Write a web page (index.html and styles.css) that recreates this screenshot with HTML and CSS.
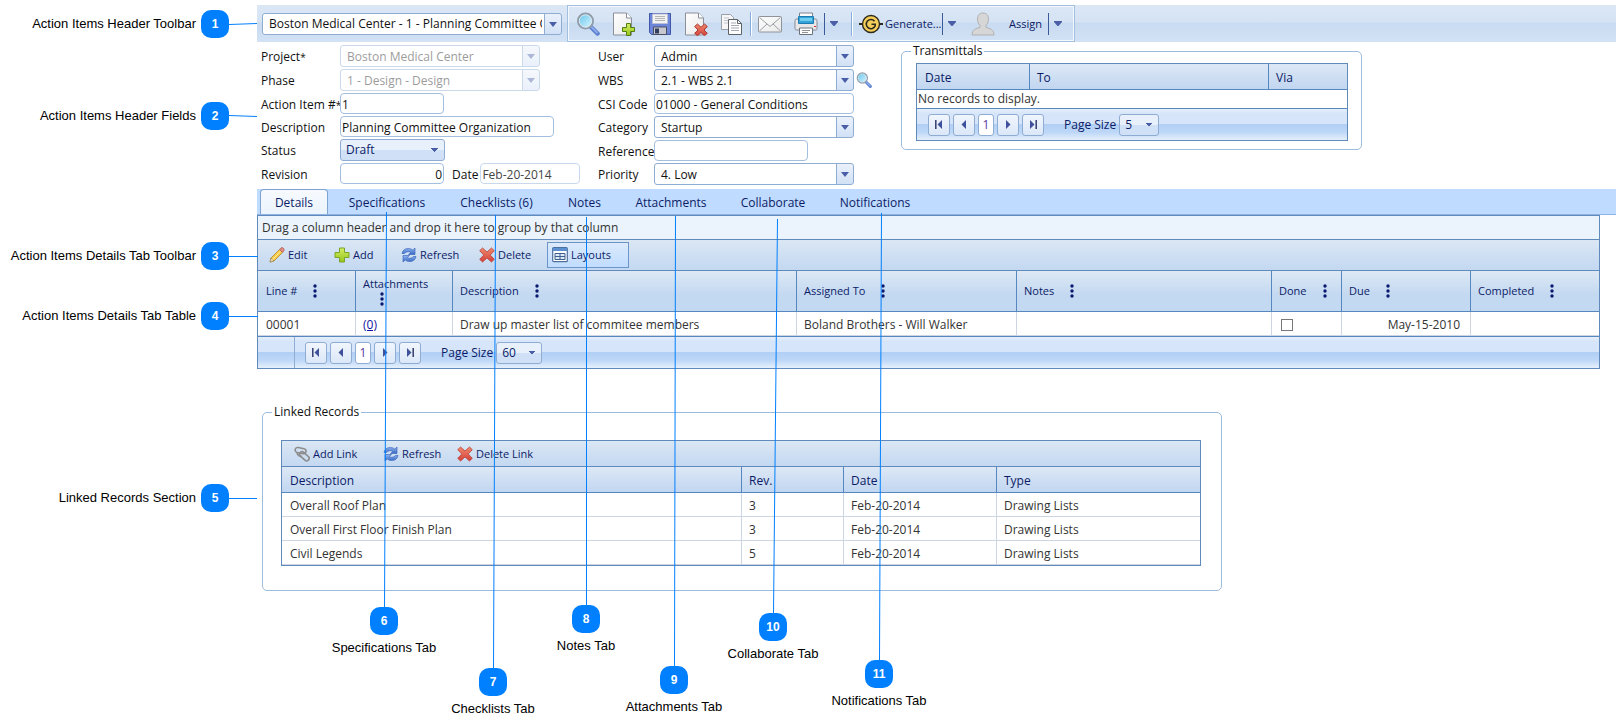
FILE: index.html
```html
<!DOCTYPE html>
<html lang="en">
<head>
<meta charset="utf-8">
<title>Action Items</title>
<link rel="stylesheet" href="styles.css">
</head>
<body>
<svg class="sprite" aria-hidden="true">
  <defs>
    <linearGradient id="g-page" x1="0" y1="0" x2="1" y2="1"><stop offset="0" stop-color="#ffffff"/><stop offset="1" stop-color="#e9e9e9"/></linearGradient>
    <linearGradient id="g-lens" x1="0" y1="0" x2="1" y2="1"><stop offset="0" stop-color="#5fc4ee"/><stop offset="1" stop-color="#e2f8ff"/></linearGradient>
    <linearGradient id="g-red" x1="0" y1="0" x2="0" y2="1"><stop offset="0" stop-color="#f08a6c"/><stop offset="1" stop-color="#d2403a"/></linearGradient>
    <linearGradient id="g-green" x1="0" y1="0" x2="0" y2="1"><stop offset="0" stop-color="#d3ee62"/><stop offset="1" stop-color="#97c51b"/></linearGradient>
    <linearGradient id="g-blue" x1="0" y1="0" x2="0" y2="1"><stop offset="0" stop-color="#8fb4ee"/><stop offset="1" stop-color="#3a69c4"/></linearGradient>
  </defs>
  <symbol id="i-search" viewBox="0 0 24 24">
    <path d="M15 15l6.500 6.500" stroke="#5b7fd0" stroke-width="4.500" stroke-linecap="round"/>
    <path d="M15 14.500l6 6" stroke="#8fabea" stroke-width="2" stroke-linecap="round"/>
    <circle cx="9.500" cy="9" r="7.500" fill="url(#g-lens)" stroke="#8e9cab" stroke-width="2"/>
    <circle cx="9.500" cy="9" r="6.200" fill="none" stroke="#dfe7ee" stroke-width="1"/>
  </symbol>
  <symbol id="i-new" viewBox="0 0 24 24">
    <path d="M1.500 1h13l5 5v17h-18z" fill="url(#g-page)" stroke="#8a8f98"/>
    <path d="M14.500 1v5h5" fill="#fff" stroke="#8a8f98"/>
    <path d="M14.500 11.500h4v4h4v4h-4v4h-4v-4h-4v-4h4z" fill="url(#g-green)" stroke="#4f7d10"/>
  </symbol>
  <symbol id="i-save" viewBox="0 0 24 24">
    <path d="M1.500 1.500h21v21h-19l-2-2z" fill="#6c86da" stroke="#4056a8"/>
    <path d="M4.500 2h15v9.500h-15z" fill="#f3f3f3" stroke="#b9bfd6"/>
    <path d="M7 4.500h10M7 6.500h10M7 8.500h10" stroke="#b4b4b4"/>
    <path d="M5.500 15h13v7.500h-13z" fill="#c8c9d0" stroke="#4a4f66"/>
    <path d="M7 16.500h4v5h-4z" fill="#32405f"/>
  </symbol>
  <symbol id="i-pagedel" viewBox="0 0 24 24">
    <path d="M1.500 1h13l5 5v17h-18z" fill="url(#g-page)" stroke="#8a8f98"/>
    <path d="M14.500 1v5h5" fill="#fff" stroke="#8a8f98"/>
    <path d="M13.500 12l3.500 3.300 3.500-3.300 2.800 2.500-3.300 3.500 3.300 3.300-2.800 2.500-3.500-3.300-3.500 3.300-2.800-2.500 3.300-3.300-3.300-3.500z" fill="url(#g-red)" stroke="#a93430"/>
  </symbol>
  <symbol id="i-copy" viewBox="0 0 24 24">
    <path d="M1.500 2.500h9l3 3v12h-12z" fill="#f6f6f6" stroke="#9aa0a8"/>
    <path d="M4 6h5M4 8.500h7M4 11h4" stroke="#c0c4ca"/>
    <path d="M8.500 7.500h9l4 4v11h-13z" fill="#fdfdfd" stroke="#5d6269"/>
    <path d="M17.500 7.500v4h4" fill="none" stroke="#5d6269"/>
    <path d="M11 11h5M11 13.500h8M11 16h8M11 18.500h8" stroke="#a6abb3"/>
  </symbol>
  <symbol id="i-mail" viewBox="0 0 24 24">
    <rect x=".5" y="4.500" width="23" height="15.500" rx="1" fill="url(#g-page)" stroke="#8f9399"/>
    <path d="M1.500 5.500l10.500 9 10.500-9M1.500 19l7.500-7M22.500 19l-7.500-7" fill="none" stroke="#9b9fa5"/>
  </symbol>
  <symbol id="i-print" viewBox="0 0 24 24">
    <path d="M5.500 1h13v8h-13z" fill="#fbfbfb" stroke="#7e848c"/>
    <path d="M1 8.500q0-1.500 2-1.500h18q2 0 2 1.500v8q0 1.500-1.500 1.500h-19q-1.500 0-1.500-1.500z" fill="#e7e7ea" stroke="#868b93"/>
    <path d="M4.500 4.500h15v7h-15z" fill="#35a3d8" stroke="#1c7cb0"/>
    <path d="M6 6h12v3h-12z" fill="#6fcdf0"/>
    <path d="M5.500 16h13v6.500h-13z" fill="#fff" stroke="#6d727a"/>
    <path d="M8 18.500h8M8 20.500h6" stroke="#8d929a"/>
    <path d="M20 14.500h2" stroke="#d33"/>
  </symbol>
  <symbol id="i-gen" viewBox="0 0 24 24">
    <path d="M0 12h4M20 12h4" stroke="#2b2b20" stroke-width="2"/>
    <circle cx="12" cy="12" r="8.500" fill="#f6cf5b" stroke="#2f2b1c" stroke-width="1.400"/>
    <path d="M15.500 9.200a4.600 4.600 0 1 0 .7 4.600v-1.600h-3.700" fill="none" stroke="#2f2b1c" stroke-width="1.600"/>
  </symbol>
  <symbol id="i-user" viewBox="0 0 24 24">
    <path d="M12 1c3.600 0 5.500 2.400 5.500 6 0 2.800-1 5-2.500 6.300v2.200c4.500.8 8 2.500 8 7.500h-22c0-5 3.500-6.700 8-7.500v-2.200c-1.500-1.300-2.500-3.500-2.500-6.300 0-3.600 1.900-6 5.500-6z" fill="#d6d6d6" stroke="#b0b0b0"/>
  </symbol>
  <symbol id="i-pencil" viewBox="0 0 16 16">
    <path d="M1 15l1-4 8.500-8.500 3 3-8.500 8.500z" fill="#f7c948" stroke="#b08a2a" stroke-width=".8"/>
    <path d="M10.500 2.500l1.500-1.600q1.200-.8 2.300.2t.7 2.400l-1.500 2z" fill="#e58a83" stroke="#a8625c" stroke-width=".8"/>
    <path d="M1 15l1-4 3 3z" fill="#ecd9b8" stroke="#8e7a55" stroke-width=".6"/>
    <path d="M3.500 12.500l8-8" stroke="#fdeaa0"/>
  </symbol>
  <symbol id="i-add" viewBox="0 0 16 16">
    <path d="M5.500 1h5v4.500h4.500v5h-4.500v4.500h-5v-4.500h-4.500v-5h4.500z" fill="url(#g-green)" stroke="#7ba428"/>
  </symbol>
  <symbol id="i-refresh" viewBox="0 0 16 16">
    <path d="M1 6.500q1-5 6.500-5 2.500 0 4.300 1.500l2.200-2v6.500h-6.500l2.200-2q-1.200-1-2.700-.8-2.300.1-3.500 1.800z" fill="url(#g-blue)" stroke="#3f6abf" stroke-width=".7"/>
    <path d="M15 9.500q-1 5-6.500 5-2.500 0-4.300-1.500l-2.200 2v-6.500h6.500l-2.200 2q1.200 1 2.700.8 2.300-.1 3.500-1.800z" fill="url(#g-blue)" stroke="#3f6abf" stroke-width=".7"/>
  </symbol>
  <symbol id="i-del" viewBox="0 0 16 16">
    <path d="M3.500 1l4.500 4 4.500-4 2.800 2.700-4.100 4.300 4.100 4.300-2.800 2.700-4.500-4-4.500 4-2.800-2.700 4.100-4.300-4.100-4.300z" fill="url(#g-red)" stroke="#bb4038" stroke-width=".8"/>
  </symbol>
  <symbol id="i-layout" viewBox="0 0 16 16">
    <rect x=".7" y=".7" width="14.600" height="14" rx="1" fill="#fff" stroke="#4c6f9c" stroke-width="1.200"/>
    <path d="M1 1h14v3h-14z" fill="#5b8fd0"/>
    <path d="M3 6.500h10v6h-10z" fill="#dbe9f8" stroke="#3f5f8c"/>
    <path d="M8 6.500v6M3 9.500h10" stroke="#3f5f8c"/>
  </symbol>
  <symbol id="i-link" viewBox="0 0 16 16">
    <g fill="none" stroke="#8c8c8c" stroke-width="1.600"><rect x="1" y="2" width="11" height="5" rx="2.500" transform="rotate(12 6 5)"/><rect x="5" y="7.500" width="11" height="5" rx="2.500" transform="rotate(42 10 10)"/><path d="M3 7q1 3.500 5 3.500"/></g>
  </symbol>
  <symbol id="i-caret" viewBox="0 0 8 5"><path d="M0 0h8v1l-3.500 4h-1l-3.500-4z" fill="#4a5ea8"/></symbol>
  <symbol id="i-dots" viewBox="0 0 4 14"><g fill="#0a1a70"><circle cx="2" cy="2" r="1.700"/><circle cx="2" cy="7" r="1.700"/><circle cx="2" cy="12" r="1.700"/></g></symbol>
  <symbol id="i-first" viewBox="0 0 8 9"><path d="M.8 0v9" stroke="#333c6e" stroke-width="1.500"/><path d="M7 0v9l-4.500-4.500z" fill="#3f519a"/></symbol>
  <symbol id="i-prev" viewBox="0 0 8 9"><path d="M6 0v9l-4.500-4.500z" fill="#3f519a"/></symbol>
  <symbol id="i-next" viewBox="0 0 8 9"><path d="M2 0v9l4.500-4.500z" fill="#3f519a"/></symbol>
  <symbol id="i-last" viewBox="0 0 8 9"><path d="M7.200 0v9" stroke="#333c6e" stroke-width="1.500"/><path d="M1 0v9l4.500-4.500z" fill="#3f519a"/></symbol>
</svg>

<main class="app">
  <header class="topbar">
    <span class="combo record"><select aria-label="Action item record"><option>Boston Medical Center - 1 - Planning Committee Organization</option></select></span>
    <div class="tools" role="toolbar" aria-label="Action item">
      <div class="tool-group">
        <button class="tool" aria-label="Search"><svg><use href="#i-search"/></svg></button>
        <button class="tool" aria-label="New"><svg><use href="#i-new"/></svg></button>
        <button class="tool" aria-label="Save"><svg><use href="#i-save"/></svg></button>
        <button class="tool" aria-label="Delete"><svg><use href="#i-pagedel"/></svg></button>
        <button class="tool" aria-label="Copy"><svg><use href="#i-copy"/></svg></button>
      </div>
      <span class="divider"></span>
      <div class="tool-group">
        <button class="tool" aria-label="Email"><svg><use href="#i-mail"/></svg></button>
        <button class="tool" aria-label="Print"><svg><use href="#i-print"/></svg></button>
      </div>
      <button class="split" aria-label="Print options"><svg><use href="#i-caret"/></svg></button>
      <span class="divider"></span>
      <button class="tool wide"><svg><use href="#i-gen"/></svg>Generate...</button>
      <button class="split" aria-label="Generate options"><svg><use href="#i-caret"/></svg></button>
      <button class="tool wide assign"><svg><use href="#i-user"/></svg>Assign</button>
      <button class="split" aria-label="Assign options"><svg><use href="#i-caret"/></svg></button>
    </div>
  </header>

  <section class="fields">
    <div class="form form-a">
      <label for="project">Project<small>*</small></label>
      <span class="combo off"><select id="project" disabled><option>Boston Medical Center</option></select></span>
      <label for="phase">Phase</label>
      <span class="combo off"><select id="phase" disabled><option>1 - Design - Design</option></select></span>
      <label for="num">Action Item #<small>*</small></label>
      <input id="num" class="text short" value="1">
      <label for="desc">Description</label>
      <input id="desc" class="text long" value="Planning Committee Organization">
      <label for="status">Status</label>
      <select id="status" class="drop short"><option>Draft</option></select>
      <label for="rev">Revision</label>
      <div class="pair"><input id="rev" class="text short num" value="0"><label for="date">Date</label><input id="date" class="text date" value="Feb-20-2014" disabled></div>
    </div>
    <div class="form form-b">
      <label for="user">User</label>
      <span class="combo"><select id="user"><option>Admin</option></select></span>
      <label for="wbs">WBS</label>
      <div class="pair"><span class="combo"><select id="wbs"><option>2.1 - WBS 2.1</option></select></span><button class="lookup" aria-label="Find WBS"><svg><use href="#i-search"/></svg></button></div>
      <label for="csi">CSI Code</label>
      <input id="csi" class="text" value="01000 - General Conditions">
      <label for="cat">Category</label>
      <span class="combo"><select id="cat"><option>Startup</option></select></span>
      <label for="ref">Reference</label>
      <input id="ref" class="text mid">
      <label for="pri">Priority</label>
      <span class="combo"><select id="pri"><option>4. Low</option></select></span>
    </div>
    <fieldset class="transmittals">
      <legend>Transmittals</legend>
      <div class="grid">
        <table>
          <colgroup><col class="w112"><col><col class="w79"></colgroup>
          <thead><tr><th>Date</th><th>To</th><th>Via</th></tr></thead>
          <tbody><tr><td colspan="3" class="empty">No records to display.</td></tr></tbody>
        </table>
        <div class="pager">
          <button class="page" aria-label="First page"><svg><use href="#i-first"/></svg></button>
          <button class="page" aria-label="Previous page"><svg><use href="#i-prev"/></svg></button>
          <button class="page current">1</button>
          <button class="page" aria-label="Next page"><svg><use href="#i-next"/></svg></button>
          <button class="page" aria-label="Last page"><svg><use href="#i-last"/></svg></button>
          <label for="size-a">Page Size</label>
          <select id="size-a" class="drop size-s"><option>5</option></select>
        </div>
      </div>
    </fieldset>
  </section>

  <nav class="tabs" role="tablist">
    <button class="tab active" role="tab" aria-selected="true">Details</button>
    <button class="tab" role="tab">Specifications</button>
    <button class="tab" role="tab">Checklists (6)</button>
    <button class="tab" role="tab">Notes</button>
    <button class="tab" role="tab">Attachments</button>
    <button class="tab" role="tab">Collaborate</button>
    <button class="tab" role="tab">Notifications</button>
  </nav>

  <section class="grid details">
    <div class="group-hint">Drag a column header and drop it here to group by that column</div>
    <div class="commands" role="toolbar" aria-label="Details">
      <button class="cmd"><svg><use href="#i-pencil"/></svg>Edit</button>
      <button class="cmd"><svg><use href="#i-add"/></svg>Add</button>
      <button class="cmd"><svg><use href="#i-refresh"/></svg>Refresh</button>
      <button class="cmd"><svg><use href="#i-del"/></svg>Delete</button>
      <button class="cmd boxed"><svg><use href="#i-layout"/></svg>Layouts</button>
    </div>
    <table>
      <colgroup><col class="w97"><col class="w97"><col><col class="w220"><col class="w255"><col class="w70"><col class="w129"><col class="w129"></colgroup>
      <thead><tr>
        <th><div class="head">Line #<button aria-label="Line # menu"><svg><use href="#i-dots"/></svg></button></div></th>
        <th><div class="head stacked">Attachments<button aria-label="Attachments menu"><svg><use href="#i-dots"/></svg></button></div></th>
        <th><div class="head">Description<button aria-label="Description menu"><svg><use href="#i-dots"/></svg></button></div></th>
        <th><div class="head">Assigned To<button aria-label="Assigned To menu"><svg><use href="#i-dots"/></svg></button></div></th>
        <th><div class="head">Notes<button aria-label="Notes menu"><svg><use href="#i-dots"/></svg></button></div></th>
        <th><div class="head">Done<button aria-label="Done menu"><svg><use href="#i-dots"/></svg></button></div></th>
        <th><div class="head">Due<button aria-label="Due menu"><svg><use href="#i-dots"/></svg></button></div></th>
        <th><div class="head">Completed<button aria-label="Completed menu"><svg><use href="#i-dots"/></svg></button></div></th>
      </tr></thead>
      <tbody><tr>
        <td>00001</td><td><a href="#attachments">(0)</a></td><td>Draw up master list of commitee members</td><td>Boland Brothers - Will Walker</td><td></td>
        <td><input type="checkbox" class="check" aria-label="Done"></td><td class="right">May-15-2010</td><td></td>
      </tr></tbody>
    </table>
    <div class="pager indented">
      <button class="page" aria-label="First page"><svg><use href="#i-first"/></svg></button>
      <button class="page" aria-label="Previous page"><svg><use href="#i-prev"/></svg></button>
      <button class="page current">1</button>
      <button class="page" aria-label="Next page"><svg><use href="#i-next"/></svg></button>
      <button class="page" aria-label="Last page"><svg><use href="#i-last"/></svg></button>
      <label for="size-b">Page Size</label>
      <select id="size-b" class="drop size-l"><option>60</option></select>
    </div>
  </section>

  <fieldset class="linked">
    <legend>Linked Records</legend>
    <div class="grid">
      <div class="commands links" role="toolbar" aria-label="Linked records">
        <button class="cmd"><svg><use href="#i-link"/></svg>Add Link</button>
        <button class="cmd"><svg><use href="#i-refresh"/></svg>Refresh</button>
        <button class="cmd"><svg><use href="#i-del"/></svg>Delete Link</button>
      </div>
      <table>
        <colgroup><col><col class="w102"><col class="w153"><col class="w204"></colgroup>
        <thead><tr><th>Description</th><th>Rev.</th><th>Date</th><th>Type</th></tr></thead>
        <tbody>
          <tr><td>Overall Roof Plan</td><td>3</td><td>Feb-20-2014</td><td>Drawing Lists</td></tr>
          <tr><td>Overall First Floor Finish Plan</td><td>3</td><td>Feb-20-2014</td><td>Drawing Lists</td></tr>
          <tr><td>Civil Legends</td><td>5</td><td>Feb-20-2014</td><td>Drawing Lists</td></tr>
        </tbody>
      </table>
    </div>
  </fieldset>
</main>

<svg class="leaders" aria-hidden="true">
  <g stroke="#0080ff" fill="none">
    <path d="M229 24.500L257 23.500M229 115.500L257 116.500M229 256.500H258M229 316.500H258M229 498.500H257"/>
    <path d="M386.500 212L384.500 607M495.500 215L493.500 668M586.500 217V605M675.500 216L674.500 666M777.500 219L773.500 613M881.500 213L879.500 660"/>
  </g>
</svg>
<div class="callout side c1">Action Items Header Toolbar<b>1</b></div>
<div class="callout side c2">Action Items Header Fields<b>2</b></div>
<div class="callout side c3">Action Items Details Tab Toolbar<b>3</b></div>
<div class="callout side c4">Action Items Details Tab Table<b>4</b></div>
<div class="callout side c5">Linked Records Section<b>5</b></div>
<div class="callout below c6"><b>6</b>Specifications Tab</div>
<div class="callout below c7"><b>7</b>Checklists Tab</div>
<div class="callout below c8"><b>8</b>Notes Tab</div>
<div class="callout below c9"><b>9</b>Attachments Tab</div>
<div class="callout below c10"><b>10</b>Collaborate Tab</div>
<div class="callout below c11"><b>11</b>Notifications Tab</div>
</body>
</html>
```

FILE: styles.css
```css
* { box-sizing: border-box; }

body {
  margin: 0;
  position: relative;
  min-height: 100vh;
  background: #fff;
  color: #111;
  font: 12px/16px "Open Sans", "Noto Sans", sans-serif;
}

button, input, select { font: inherit; color: inherit; margin: 0; }
button { padding: 0; border: 0; background: none; white-space: nowrap; }
svg { display: block; flex: none; }
small { font-size: 10px; }
.sprite { position: absolute; width: 0; height: 0; }

.app { padding: 5px 0 140px 257px; }

/* Top toolbar */
.topbar {
  display: flex;
  align-items: center;
  gap: 5px;
  height: 37px;
  padding-left: 5px;
  background: linear-gradient(#dce7f5, #d5e3f4 45%, #c8dbf1 50%, #d3e2f5);
}
.tools {
  display: flex;
  align-items: center;
  height: 37px;
  padding: 0 7px 0 8px;
  border: 1px solid #a3bfdf;
  box-shadow: inset 0 0 0 1px #f3f8fe;
  color: #0b1b66;
  font-size: 11px;
}
.tool-group { display: flex; gap: 12px; }
.tool svg { width: 24px; height: 24px; }
.wide { display: flex; align-items: center; gap: 2px; width: 77px; }
.wide.assign { width: 71px; gap: 14px; }
.divider { width: 2px; height: 24px; margin: 0 6px; background: linear-gradient(90deg, #86aedd 50%, #fff 50%); }
.split { width: 19px; height: 22px; margin-left: 6px; padding-left: 5px; border-left: 1px solid #3b5a9a; }
.split svg { width: 8px; height: 5px; }
.split + .tool { margin-left: 10px; }
.split + .divider { margin-left: 8px; }

/* Form controls */
.combo {
  display: flex;
  position: relative;
  width: 200px;
  height: 22px;
}
.combo.record { width: 300px; }
.combo select {
  appearance: none;
  width: 100%;
  padding: 1px 19px 0 6px;
  border: 1px solid #8fadd3;
  border-radius: 3px;
  background: linear-gradient(#eaf1fb, #d2e1f6) right / 17px 100% no-repeat #fff;
}
.combo::before {
  content: "";
  position: absolute;
  inset: 1px 17px 1px auto;
  border-left: 1px solid #8fadd3;
  pointer-events: none;
}
.combo::after {
  content: "";
  position: absolute;
  top: 9px;
  right: 5px;
  border: 4px solid transparent;
  border-top: 5px solid #4a5ea8;
  border-bottom: 0;
  pointer-events: none;
}
.combo.off { opacity: 0.45; }
.combo.off select { opacity: 1; color: #222; }

.text {
  width: 100%;
  height: 21px;
  padding: 2px 1px 0;
  border: 1px solid #a3bfe0;
  border-radius: 4px;
  background: #fff;
}
.text.short { width: 104px; }
.text.long { width: 214px; }
.text.mid { width: 154px; }
.text.date { width: 100px; color: #444; border-color: #c8d9ee; }
.text.num { text-align: right; }

.drop {
  appearance: none;
  height: 22px;
  padding: 0 5px;
  border: 1px solid #8fadd3;
  border-radius: 3px;
  color: #0b1b66;
  background:
    linear-gradient(135deg, #4a5ea8 50%, transparent 50%) right 5px top 8px / 4px 4px no-repeat,
    linear-gradient(225deg, #4a5ea8 50%, transparent 50%) right 9px top 8px / 4px 4px no-repeat,
    linear-gradient(#e8f0fb 48%, #d0e0f6 52%);
}
.drop.size-s { width: 40px; }
.drop.size-l { width: 46px; }
.drop.short { width: 105px; }

.fields {
  display: flex;
  align-items: flex-start;
  padding: 1px 0 4px 4px;
}
.form {
  display: grid;
  align-items: center;
  gap: 2px 0;
  margin-top: 2px;
  white-space: nowrap;
}
.form label { padding-top: 2px; }
.form-a { grid-template-columns: 79px 258px; }
.form-b { grid-template-columns: 56px 200px; margin-right: 47px; }
.pair { display: flex; align-items: center; gap: 2px; }
.pair label { padding-left: 6px; }
.pair .combo { flex: none; }
.lookup svg { width: 16px; height: 16px; }

fieldset {
  min-width: 0;
  margin: 0;
  border: 1px solid #9dbbdc;
  border-radius: 5px;
}
legend { margin-left: -5px; padding: 0 2px; }
.transmittals { width: 461px; padding: 4px 13px 8px 14px; }

/* Grids */
.grid { border: 1px solid #5f8abb; }
table {
  width: 100%;
  table-layout: fixed;
  border-collapse: separate;
  border-spacing: 0;
}
th {
  height: 26px;
  padding: 2px 8px 0;
  border-bottom: 1px solid #5787bf;
  color: #0b1b66;
  font-weight: normal;
  text-align: left;
  white-space: nowrap;
  background: linear-gradient(#dde8f5, #c1d6f1);
}
th + th { padding-left: 7px; border-left: 1px solid #5787bf; }
td {
  height: 24px;
  padding: 2px 8px 0;
  border-bottom: 1px solid #cdd5e3;
  color: #333;
  white-space: nowrap;
}
td + td { padding-left: 7px; border-left: 1px solid #cdd5e3; }
td.empty { height: 18px; padding: 0 1px; border-bottom: 0; }
td.right { text-align: right; padding-right: 10px; }
td a { color: #1414a0; }
.w70 { width: 70px; }
.w79 { width: 79px; }
.w97 { width: 97px; }
.w102 { width: 102px; }
.w112 { width: 112px; }
.w129 { width: 129px; }
.w153 { width: 153px; }
.w204 { width: 204px; }
.w220 { width: 220px; }
.w255 { width: 255px; }

.pager {
  display: flex;
  align-items: center;
  gap: 3px;
  height: 32px;
  padding-left: 11px;
  border-top: 1px solid #5787bf;
  color: #0b1b66;
  background: linear-gradient(#e6effb, #d6e5f9 15%, #d6e5f9 47%, #b1cff5 50%, #bdd7f7 75%, #e6f0fc);
}
.pager label { margin-left: 17px; }
.page {
  display: flex;
  align-items: center;
  justify-content: center;
  width: 22px;
  height: 22px;
  border: 1px solid #8fadd3;
  border-radius: 3px;
  background: linear-gradient(#f1f6fd, #dbe7f8);
}
.page svg { width: 8px; height: 9px; }
.page.current { width: 16px; color: #5a3ea0; background: #fff; }

/* Tabs */
.tabs {
  display: grid;
  grid-template-columns: 71px 112px 107px 69px 104px 100px 104px;
  height: 26px;
  padding-left: 3px;
  border-bottom: 1px solid #8db2e3;
  background: #bfdbff;
  color: #0b1b66;
}
.tab { padding-top: 2px; }
.tab.active {
  width: 68px;
  border: 1px solid #7ea3cf;
  border-bottom: 0;
  border-radius: 4px 4px 0 0;
  background: linear-gradient(#f7fafe, #ebf3fd);
}

.details { margin-right: 16px; }
.group-hint {
  height: 24px;
  padding: 4px;
  border-bottom: 1px solid #5f8abb;
  color: #333;
  background: #ebf3fd;
}
.commands {
  display: grid;
  grid-template-columns: 65px 67px 78px 68px 82px;
  align-items: center;
  height: 31px;
  padding-left: 11px;
  border-bottom: 1px solid #5f8abb;
  color: #0b1b66;
  font-size: 11px;
  background: linear-gradient(#dbe7f4, #c3d8f1);
}
.commands.links {
  grid-template-columns: 89px 74px 90px;
  height: 26px;
  padding-left: 12px;
}
.cmd { display: flex; align-items: center; gap: 3px; }
.cmd svg { width: 16px; height: 16px; }
.cmd.boxed {
  height: 26px;
  padding: 0 4px;
  border: 1px solid #6c95c8;
  background: linear-gradient(#dceafb, #c0dcff);
}
.details th {
  height: 41px;
  padding-top: 0;
  font-size: 11px;
  background: linear-gradient(#dde9f5, #c3d8f1 60%);
}
.head { display: flex; align-items: center; gap: 16px; }
.head svg { width: 4px; height: 14px; }
.head.stacked { display: block; line-height: 16px; }
.head.stacked button { display: block; padding-left: 17px; }
.check {
  display: block;
  appearance: none;
  width: 12px;
  height: 12px;
  margin-left: 2px;
  border: 1px solid #777;
  background: #fff;
}
.indented {
  padding-left: 47px;
  background:
    linear-gradient(#8fadd3, #8fadd3) 36px 0 / 1px 100% no-repeat,
    linear-gradient(#e6effb, #d6e5f9 15%, #d6e5f9 47%, #b1cff5 50%, #bdd7f7 75%, #e6f0fc);
}

.linked {
  width: 960px;
  max-width: calc(100% - 21px);
  margin: 35px 0 0 5px;
  padding: 20px 20px 24px 18px;
}
.linked legend { margin-left: -9px; }

/* Numbered callouts laid over the page */
.leaders { position: absolute; top: 0; left: 0; width: 900px; height: 720px; pointer-events: none; }
.callout {
  position: absolute;
  display: flex;
  align-items: center;
  color: #000;
  font: 13px/16px "Liberation Sans", sans-serif;
  white-space: nowrap;
}
.callout b {
  width: 28px;
  height: 28px;
  border-radius: 10px;
  background: #0080ff;
  color: #fff;
  font-size: 12px;
  line-height: 28px;
  text-align: center;
}
.side { left: 0; width: 229px; justify-content: flex-end; gap: 5px; }
.below { flex-direction: column; width: 120px; gap: 5px; }
.c1 { top: 10px; }
.c2 { top: 102px; }
.c3 { top: 242px; }
.c4 { top: 302px; }
.c5 { top: 484px; }
.c6 { top: 607px; left: 324px; }
.c7 { top: 668px; left: 433px; }
.c8 { top: 605px; left: 526px; }
.c9 { top: 666px; left: 614px; }
.c10 { top: 613px; left: 713px; }
.c11 { top: 660px; left: 819px; }
```
